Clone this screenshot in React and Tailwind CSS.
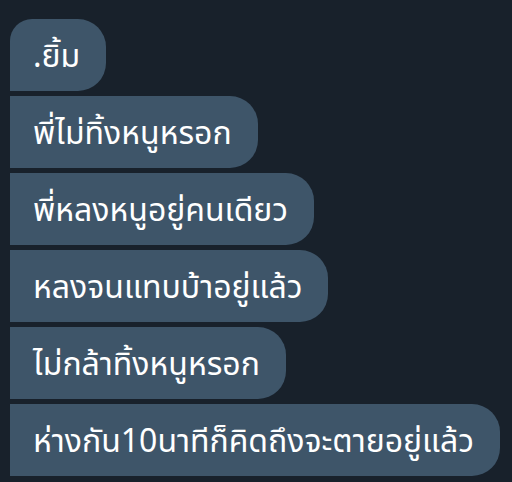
import React from 'react';

const messages = [
  '.ยิ้ม',
  'พี่ไม่ทิ้งหนูหรอก',
  'พี่หลงหนูอยู่คนเดียว',
  'หลงจนแทบบ้าอยู่แล้ว',
  'ไม่กล้าทิ้งหนูหรอก',
  'ห่างกัน10นาทีก็คิดถึงจะตายอยู่แล้ว',
];

export default function App() {
  return (
    <div className="w-[512px] h-[482px] overflow-hidden bg-[#18212b] pt-[19px] pl-[10px]">
      <div className="flex flex-col items-start gap-[5px]">
        {messages.map((text, i) => (
          <div
            key={i}
            className={
              'h-[72px] flex items-center pl-[23px] pr-[26px] bg-[#3e5569] text-white text-[32px] leading-none font-["Noto_Sans","Noto_Sans_Thai",sans-serif] rounded-r-[28px] ' +
              (i === 0 ? 'rounded-tl-[22px]' : '')
            }
          >
            {text}
          </div>
        ))}
      </div>
    </div>
  );
}
